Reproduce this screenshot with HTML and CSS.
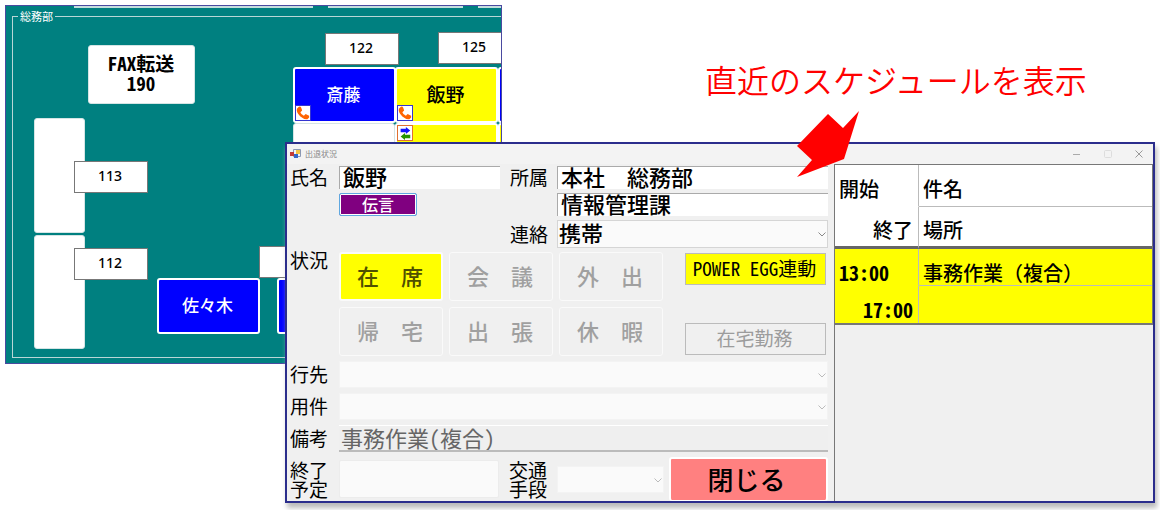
FILE: index.html
```
<!DOCTYPE html>
<html lang="ja">
<head>
<meta charset="utf-8">
<title>出退状況</title>
<link rel="stylesheet" href="styles.css">
</head>
<body>
<main class="stage">
  <section class="floor" aria-label="座席表">
    <div class="cut cut-a"></div>
    <div class="cut cut-b"></div>
    <div class="cut cut-c"></div>
    <fieldset class="group"><legend>総務部</legend></fieldset>
    <button class="seat seat-fax">FAX転送<br>190</button>
    <button class="seat seat-left-top" aria-label="空席"></button>
    <button class="seat seat-left-bottom" aria-label="空席"></button>
    <div class="ext ext-113">113</div>
    <div class="ext ext-112">112</div>
    <div class="ext ext-122">122</div>
    <div class="ext ext-125">125</div>
    <div class="ext ext-blank"></div>
    <button class="seat person sasaki">佐々木</button>
    <button class="seat person beside" aria-label="席"></button>
    <button class="seat person saito">斎藤
      <svg class="mark" viewBox="0 0 16 16"><path class="phone" d="M1 3 3 1Q5 0 6 2L7 5 5 7Q6 10 9 11L11 9 15 11Q16 13 13 15 10 16 5 12 0 7 1 3Z"/></svg>
    </button>
    <button class="seat person iino">飯野
      <svg class="mark" viewBox="0 0 16 16"><path class="phone" d="M1 3 3 1Q5 0 6 2L7 5 5 7Q6 10 9 11L11 9 15 11Q16 13 13 15 10 16 5 12 0 7 1 3Z"/></svg>
    </button>
    <button class="seat person edge" aria-label="席"></button>
    <button class="seat vacant" aria-label="空席"></button>
    <button class="seat person lower" aria-label="席">
      <svg class="mark swap" viewBox="0 0 16 16"><path fill="#1414ff" d="M3 3h6V1l5 4-5 4V7H3z"/><path fill="#259400" d="M14 10H8V8l-5 4 5 4v-2h6z"/></svg>
    </button>
    <button class="seat person lower-edge" aria-label="席"></button>
  </section>

  <section class="dialog">
    <header class="titlebar">
      <svg class="app" viewBox="0 0 11 10"><path fill="#f4f4f4" stroke="#8a98b4" d="M3.500 .5h7v7h-7z"/><path fill="#c43c34" d="M0 3h4v4H0z"/><path fill="#3568c8" d="M4 5h4v4H4z"/><path fill="#f5c542" d="M6 1h4v4H6z"/></svg>
      <h1>出退状況</h1>
      <button class="win" aria-label="最小化"><svg viewBox="0 0 8 8"><path d="M0 4.500h7" stroke="#aaa"/></svg></button>
      <button class="win" aria-label="最大化" disabled><svg viewBox="0 0 8 8"><rect x=".5" y=".5" width="7" height="7" rx="1" stroke="#ddd"/></svg></button>
      <button class="win" aria-label="閉じる"><svg viewBox="0 0 8 8"><path d="m.5.5 7 7m0-7-7 7" stroke="#999"/></svg></button>
    </header>
    <div class="content">
      <form class="form">
        <div class="fields top">
          <label for="name">氏名</label>
          <input id="name" class="box" value="飯野">
          <label for="dept" class="mid">所属</label>
          <input id="dept" class="box" value="本社　総務部">
          <button type="button" class="message">伝言</button>
          <input class="box section" aria-label="課" value="情報管理課">
          <label for="contact" class="mid contact">連絡</label>
          <span class="pick">
            <select id="contact"><option>携帯</option></select>
            <svg viewBox="0 0 8 5"><path d="m.5.5 3.500 3.500L7.500.5"/></svg>
          </span>
        </div>
        <div class="fields states">
          <span class="label">状況</span>
          <div class="state-grid">
            <button type="button" class="state on">在　席</button>
            <button type="button" class="state">会　議</button>
            <button type="button" class="state">外　出</button>
            <button type="button" class="state">帰　宅</button>
            <button type="button" class="state">出　張</button>
            <button type="button" class="state">休　暇</button>
          </div>
          <div class="extras">
            <button type="button" class="link-egg">POWER EGG連動</button>
            <button type="button" class="remote">在宅勤務</button>
          </div>
        </div>
        <div class="fields wide">
          <label for="dest">行先</label>
          <span class="pick off"><select id="dest" disabled></select><svg viewBox="0 0 8 5"><path d="m.5.5 3.500 3.500L7.500.5"/></svg></span>
          <label for="task">用件</label>
          <span class="pick off"><select id="task" disabled></select><svg viewBox="0 0 8 5"><path d="m.5.5 3.500 3.500L7.500.5"/></svg></span>
          <label for="memo">備考</label>
          <input id="memo" class="memo" value="事務作業(複合)" disabled>
        </div>
        <div class="fields foot">
          <label for="end">終了<br>予定</label>
          <input id="end" class="end" disabled>
          <label for="ride" class="mid">交通<br>手段</label>
          <span class="pick off"><select id="ride" disabled></select><svg viewBox="0 0 8 5"><path d="m.5.5 3.500 3.500L7.500.5"/></svg></span>
          <button type="button" class="close">閉じる</button>
        </div>
      </form>
      <div class="schedule">
        <table>
          <thead>
            <tr><th class="time">開始</th><th>件名</th></tr>
            <tr><th class="time to">終了</th><th>場所</th></tr>
          </thead>
          <tbody>
            <tr><td class="time">13:00</td><td>事務作業（複合）</td></tr>
            <tr><td class="time to">17:00</td><td></td></tr>
          </tbody>
        </table>
      </div>
    </div>
  </section>

  <p class="caption">直近のスケジュールを表示</p>
  <svg class="arrow" viewBox="0 0 62 66" aria-hidden="true"><path d="M31 3 46 17 62 0 47 48 0 66 15 49 0 35Z"/></svg>
</main>
</body>
</html>
```
FILE: styles.css
```
* { box-sizing: border-box; }
body {
  margin: 0;
  background: #fff;
  color: #000;
  font-family: "Noto Sans CJK JP", sans-serif;
  font-size: 19px;
}
button, input, select {
  margin: 0;
  padding: 0;
  border: 0;
  border-radius: 0;
  font: inherit;
  color: inherit;
}
.stage {
  position: relative;
  padding: 142px 5px 7px 285px;
}

/* half-width latin letters and digits */
.seat-fax, .extras .link-egg, .memo, td.time {
  font-family: "Noto Sans Mono CJK JP", "Noto Sans CJK JP", monospace;
}

/* seat map */
.floor {
  position: absolute;
  left: 5px;
  top: 5px;
  width: 497px;
  height: 359px;
  overflow: hidden;
  background: #008080;
  border: 1px solid #4a4aa0;
}
.floor > * { position: absolute; }
.cut { top: 0; height: 2px; background: #c4dede; }
.cut-a { left: 68px; width: 239px; }
.cut-b { left: 322px; width: 135px; }
.cut-c { left: 472px; width: 30px; }
.group {
  left: 6px;
  top: 3px;
  width: 510px;
  height: 349px;
  margin: 0;
  padding: 0 5px;
  border: 1px solid #b9d6d6;
}
.group legend {
  padding: 0 2px;
  color: #fff;
  font-size: 11px;
  line-height: 14px;
}
.seat {
  background: #fff;
  border: 1px solid #d5e5e5;
  border-radius: 3px;
}
.seat-fax {
  left: 82px;
  top: 39px;
  width: 107px;
  height: 59px;
  padding: 0 1px 4px 0;
  font-weight: 700;
  font-size: 19px;
  line-height: 20px;
}
.seat-left-top { left: 28px; top: 112px; width: 51px; height: 115px; }
.seat-left-bottom { left: 28px; top: 229px; width: 51px; height: 114px; }
.ext {
  width: 74px;
  height: 32px;
  padding-right: 2px;
  background: #fff;
  border: 1px solid #777;
  font: 500 14px/28px "Noto Sans", "Noto Sans CJK JP", sans-serif;
  text-align: center;
}
.ext-113 { left: 68px; top: 155px; }
.ext-112 { left: 68px; top: 242px; }
.ext-122 { left: 319px; top: 27px; }
.ext-125 { left: 432px; top: 26px; }
.ext-blank { left: 253px; top: 240px; }
.person {
  width: 103px;
  height: 56px;
  padding: 0 2px 3px 0;
  border: 2px solid #fff;
  background: #00f;
  color: #fff;
  font-size: 17px;
  font-weight: 500;
}
.sasaki { left: 151px; top: 272px; }
.beside { left: 271px; top: 272px; }
.saito { left: 287px; top: 61px; }
.iino { left: 389px; top: 61px; background: #ff0; color: #000; font-size: 19px; }
.edge { left: 492px; top: 61px; }
.vacant { left: 287px; top: 117px; width: 102px; height: 60px; }
.lower { left: 389px; top: 117px; background: #ff0; }
.lower-edge { left: 492px; top: 117px; background: #ff0; }
.mark {
  position: absolute;
  left: 0;
  bottom: 0;
  width: 16px;
  height: 16px;
  background: #fff;
  border: 1px solid #3535d0;
}
.mark.swap { top: 0; border-color: #e07030; }
.phone { fill: #ff6500; }

/* dialog */
.dialog {
  position: relative;
  border: 2px solid #2b2d8c;
  background: #f0f0f0;
  box-shadow: 2px 5px 5px #bbb;
}
.titlebar {
  display: flex;
  align-items: center;
  height: 20px;
  padding: 0 10px 0 3px;
  background: #f3f3f3;
}
.app { width: 11px; height: 10px; margin-right: 4px; }
.titlebar h1 {
  flex: 1;
  margin: 0;
  color: #888;
  font-size: 8px;
  font-weight: 400;
  line-height: 18px;
}
.win { width: 8px; height: 20px; margin-left: 23px; background: none; line-height: 0; }
.win svg { width: 8px; height: 8px; fill: none; }
.content {
  display: grid;
  grid-template-columns: minmax(0, 1fr) 319px;
}
.form { padding: 2px 6px 0 0; }
.fields {
  display: grid;
  grid-template-columns: 52px 161px 57px 1fr;
  row-gap: 4px;
}
.fields label, .label { padding-left: 3px; line-height: 26px; }
.fields .mid { padding-left: 10px; }
.top { grid-template-rows: 23px 23px 28px; }
.fields.top label { line-height: 22px; }
.box {
  min-width: 0;
  padding: 0 0 4px 3px;
  border-top: 1px solid #aaa;
  border-left: 1px solid #aaa;
  background: #fff;
  font-size: 22px;
  font-weight: 500;
  line-height: 18px;
}
.message {
  grid-column: 2;
  width: 78px;
  padding-bottom: 1px;
  border: 1px solid #5fa8e0;
  border-radius: 2px;
  background: #800080;
  box-shadow: inset 0 0 0 1px #fff;
  color: #fff;
  font-size: 16px;
  font-weight: 500;
  line-height: 18px;
}
.section { grid-column: 4; }
.fields.top .contact { grid-column: 3; line-height: 28px; }
.pick { position: relative; display: flex; }
.pick select {
  appearance: none;
  width: 100%;
  height: 28px;
  padding: 0 0 3px 1px;
  border: 1px solid #d5d5d5;
  background: #fafafa;
  font-size: 22px;
  font-weight: 500;
  line-height: 23px;
  opacity: 1;
}
.pick svg {
  position: absolute;
  right: 2px;
  top: 12px;
  width: 8px;
  height: 5px;
  fill: none;
  stroke: #888;
}
.pick.off select { height: 27px; border-color: #f3f3f3; }
.off svg { stroke: #bbb; }
.states {
  grid-template-columns: 52px 324px 1fr;
  margin-top: 4px;
}
.fields .label { line-height: 16px; }
.state-grid {
  display: grid;
  grid-template-columns: repeat(3, 104px);
  gap: 6px;
}
.state {
  height: 49px;
  padding: 0 2px 4px 0;
  border: 1px solid #fafafa;
  border-radius: 3px;
  background: #f0f0f0;
  color: #a0a0a0;
  font-size: 22px;
  font-weight: 500;
}
.state.on { border-width: 2px; background: #ff0; color: #505000; }
.extras {
  display: flex;
  flex-direction: column;
  justify-content: space-between;
  padding: 1px 2px 1px 22px;
}
.extras button {
  height: 32px;
  padding: 0 2px 2px 0;
  border: 1px solid #bbb;
  font-size: 19px;
  line-height: 28px;
  white-space: nowrap;
}
.extras .link-egg { background: #ff0; }
.extras .remote { background: #f0f0f0; color: #9c9c9c; }
.wide {
  grid-template-columns: 52px 1fr;
  row-gap: 5px;
  margin-top: 5px;
}
.memo {
  height: 27px;
  padding: 0 0 3px 2px;
  border-top: 1px solid #fff;
  border-bottom: 2px solid #bbb;
  background: #efefef;
  color: #666;
  font-size: 22px;
}
.foot {
  grid-template-columns: 52px 160px 58px 107px 1fr;
  align-items: center;
  margin-top: 5px;
}
.fields.foot label { line-height: 19px; }
.end {
  min-width: 0;
  height: 38px;
  border: 1px solid #ececec;
  border-radius: 2px;
  background: #fafafa;
}
.close {
  height: 44px;
  margin-left: 5px;
  padding: 0 4px 3px 0;
  border: 2px solid #fff;
  border-bottom-width: 1px;
  border-radius: 3px;
  background: #ff8080;
  font-size: 26px;
  font-weight: 500;
}

/* schedule */
.schedule { border-left: 1px solid #777; border-top: 1px solid #777; }
.schedule table {
  width: 100%;
  border-collapse: separate;
  border-spacing: 0;
  border-right: 1px solid #777;
  border-bottom: 2px solid #777;
  font-size: 20px;
}
th, td {
  padding: 0 3px 0 4px;
  border-bottom: 1px solid #bbb;
  font-weight: 500;
  text-align: left;
  line-height: 24px;
}
th { height: 42px; padding-top: 6px; background: #fff; }
td { height: 37px; background: #ff0; padding-top: 12px; }
td.time { font-weight: 700; }
.time { width: 84px; border-right: 1px solid #bbb; border-bottom-color: transparent; }
.to { text-align: right; padding-right: 5px; }
td.to { padding-top: 11px; }
thead tr:last-child th { border-bottom: 3px solid #666; }
tbody tr:last-child td { border-bottom: 0; }

/* annotation */
.caption {
  position: absolute;
  left: 705px;
  top: 57px;
  margin: 0;
  color: #f00;
  font-size: 32px;
  font-weight: 350;
  line-height: 44px;
}
.arrow {
  position: absolute;
  left: 797px;
  top: 111px;
  width: 62px;
  height: 66px;
  fill: #f00;
}
```
